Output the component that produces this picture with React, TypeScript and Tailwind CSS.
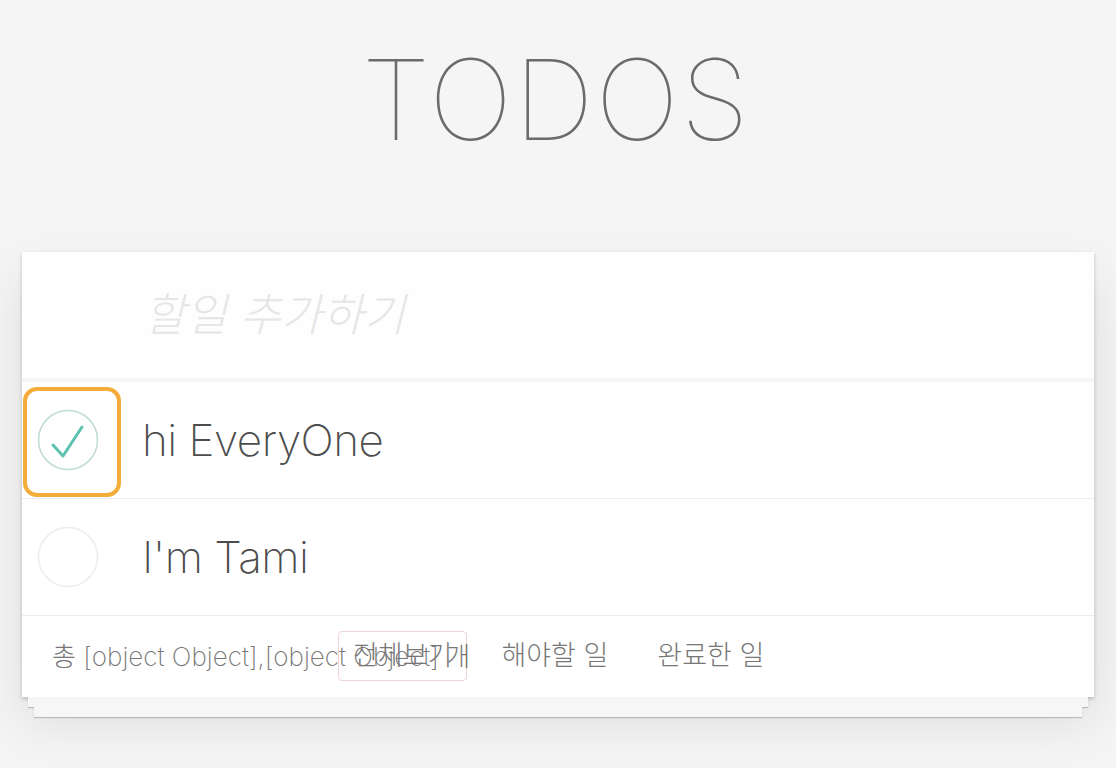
import React from 'react';

const todos = [
  { id: 1, text: 'hi EveryOne', done: true },
  { id: 2, text: "I'm Tami", done: false },
];

const filters = ['전체보기', '해야할 일', '완료한 일'];

function CheckCircle({ done }: { done: boolean }) {
  return (
    <svg width="62" height="62" viewBox="0 0 62 62" className="block">
      <circle cx="31" cy="31" r="29.5" fill="none" stroke={done ? '#bddad5' : '#ededed'} strokeWidth="1.5" />
      {done && (
        <path d="M16 36 L26 47 L45 18" fill="none" stroke="#5dc2af" strokeWidth="3" strokeLinecap="round" strokeLinejoin="round" />
      )}
    </svg>
  );
}

export default function App() {
  return (
    <div className="min-h-[768px] bg-[#f5f5f5] font-['Inter','Noto_Sans_CJK_KR',sans-serif]">
      <h1 className="h-[252px] flex justify-center pt-[43px] pr-[4px] text-[112px] leading-none font-thin text-[#6b6b6b] tracking-[1.5px]">
        TODOS
      </h1>

      <div className="mx-[22px]">
        <div className="relative bg-white shadow-[0_2px_4px_rgba(0,0,0,0.2),0_25px_50px_rgba(0,0,0,0.1)]">
          <div className="h-[130px] flex items-center pl-[122px] border-b-4 border-[#f6f6f6] bg-[#fefefe]">
            <span className="italic font-extralight text-[45px] text-[#e6e6e6]">할일 추가하기</span>
          </div>

          <ul>
            {todos.map((todo) => (
              <li key={todo.id} className="relative h-[117px] flex items-center border-b border-[#ededed]">
                {todo.done && (
                  <div className="absolute left-[1px] top-[5px] w-[98px] h-[110px] rounded-[14px] border-4 border-[#f4ac3b]" />
                )}
                <div className="ml-[15px] w-[62px]">
                  <CheckCircle done={todo.done} />
                </div>
                <span className="ml-[43px] text-[44px] font-extralight text-[#4d4d4d] tracking-[-0.5px]">{todo.text}</span>
              </li>
            ))}
          </ul>

          <div className="relative h-[81px] flex items-center pl-[30px] text-[26px] font-extralight text-[#777]">
            <span>총 [object Object],[object Object] 개</span>
            <ul className="absolute left-[316px] top-[15px] flex gap-[19px] text-[27px]">
              {filters.map((f, i) => (
                <li
                  key={f}
                  className={`h-[50px] flex items-center px-[14px] rounded-[4px] border ${
                    i === 0 ? 'border-[rgba(175,47,47,0.2)]' : 'border-transparent'
                  }`}
                >
                  {f}
                </li>
              ))}
            </ul>
          </div>
        </div>
        <div className="relative mx-[6px] h-[10px] bg-[#f6f6f6] shadow-[0_1px_1px_rgba(0,0,0,0.2)]" />
        <div className="relative mx-[12px] h-[10px] bg-[#f6f6f6] shadow-[0_1px_1px_rgba(0,0,0,0.2)]" />
      </div>
    </div>
  );
}
